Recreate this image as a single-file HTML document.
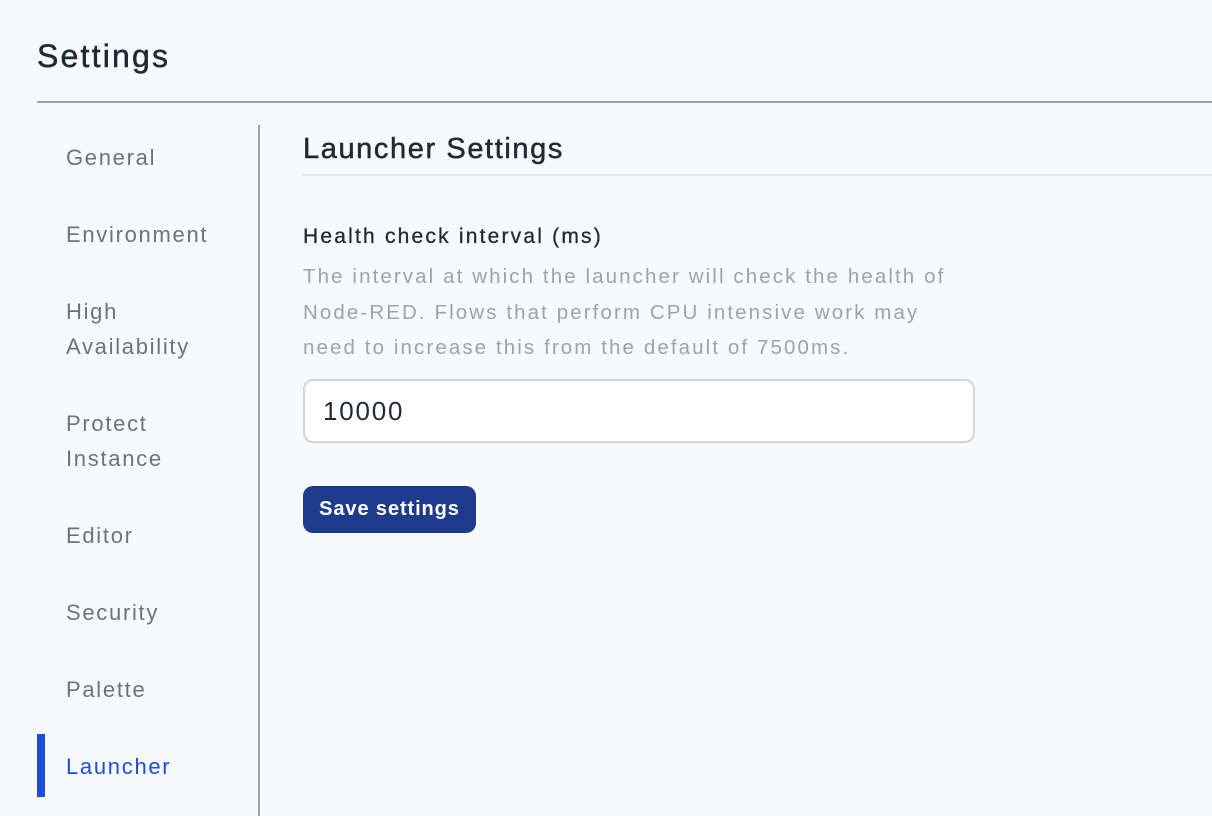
<!DOCTYPE html><html><head><style>
body{margin:0;width:1212px;height:816px;background:#f8f9fb;font-family:"Liberation Sans",sans-serif;position:relative;overflow:hidden}
.a{position:absolute;white-space:nowrap}
.n{position:absolute;left:66px;font-size:22px;color:#6b7280;line-height:35px;letter-spacing:1.7px}
</style></head><body>
<div class="a" style="left:37px;top:36px;font-size:32px;color:#1f2937;line-height:40px;letter-spacing:2.2px;-webkit-text-stroke:0.5px #1f2937">Settings</div>
<div class="a" style="left:37px;top:101px;width:1175px;height:2px;background:#9ca3af"></div>
<div class="a" style="left:258px;top:125px;width:2px;height:691px;background:#9ca3af"></div>
<div class="n" style="top:140px">General</div>
<div class="n" style="top:217px">Environment</div>
<div class="n" style="top:294px">High<br>Availability</div>
<div class="n" style="top:406px">Protect<br>Instance</div>
<div class="n" style="top:518px">Editor</div>
<div class="n" style="top:595px">Security</div>
<div class="n" style="top:672px">Palette</div>
<div class="n" style="top:749px;color:#1d4ed8">Launcher</div>
<div class="a" style="left:37px;top:734px;width:8px;height:63px;background:#1d4ed8"></div>
<div class="a" style="left:303px;top:131px;font-size:29px;color:#1f2937;line-height:36px;letter-spacing:1.6px;-webkit-text-stroke:0.5px #1f2937">Launcher Settings</div>
<div class="a" style="left:303px;top:174px;width:909px;height:2px;background:#e5e7eb"></div>
<div class="a" style="left:303px;top:222px;font-size:21px;color:#1f2937;line-height:30px;letter-spacing:2.2px;-webkit-text-stroke:0.3px #1f2937">Health check interval (ms)</div>
<div class="a" style="left:303px;top:259px;font-size:20.5px;color:#9ca3af;line-height:35.5px;letter-spacing:2.1px">The interval at which the launcher will check the health of<br>Node-RED. Flows that perform CPU intensive work may<br>need to increase this from the default of 7500ms.</div>
<div class="a" style="left:303px;top:379px;width:668px;height:60px;border:2px solid #d1d5db;border-radius:10px;background:#fff"></div>
<div class="a" style="left:323px;top:395px;font-size:26px;color:#1f2937;line-height:32px;letter-spacing:1.8px">10000</div>
<div class="a" style="left:303px;top:486px;width:173px;height:47px;border-radius:10px;background:#1e3a8a;color:#fff;font-weight:bold;font-size:20px;line-height:47px;text-align:center;letter-spacing:0.9px">Save settings</div>
</body></html>
